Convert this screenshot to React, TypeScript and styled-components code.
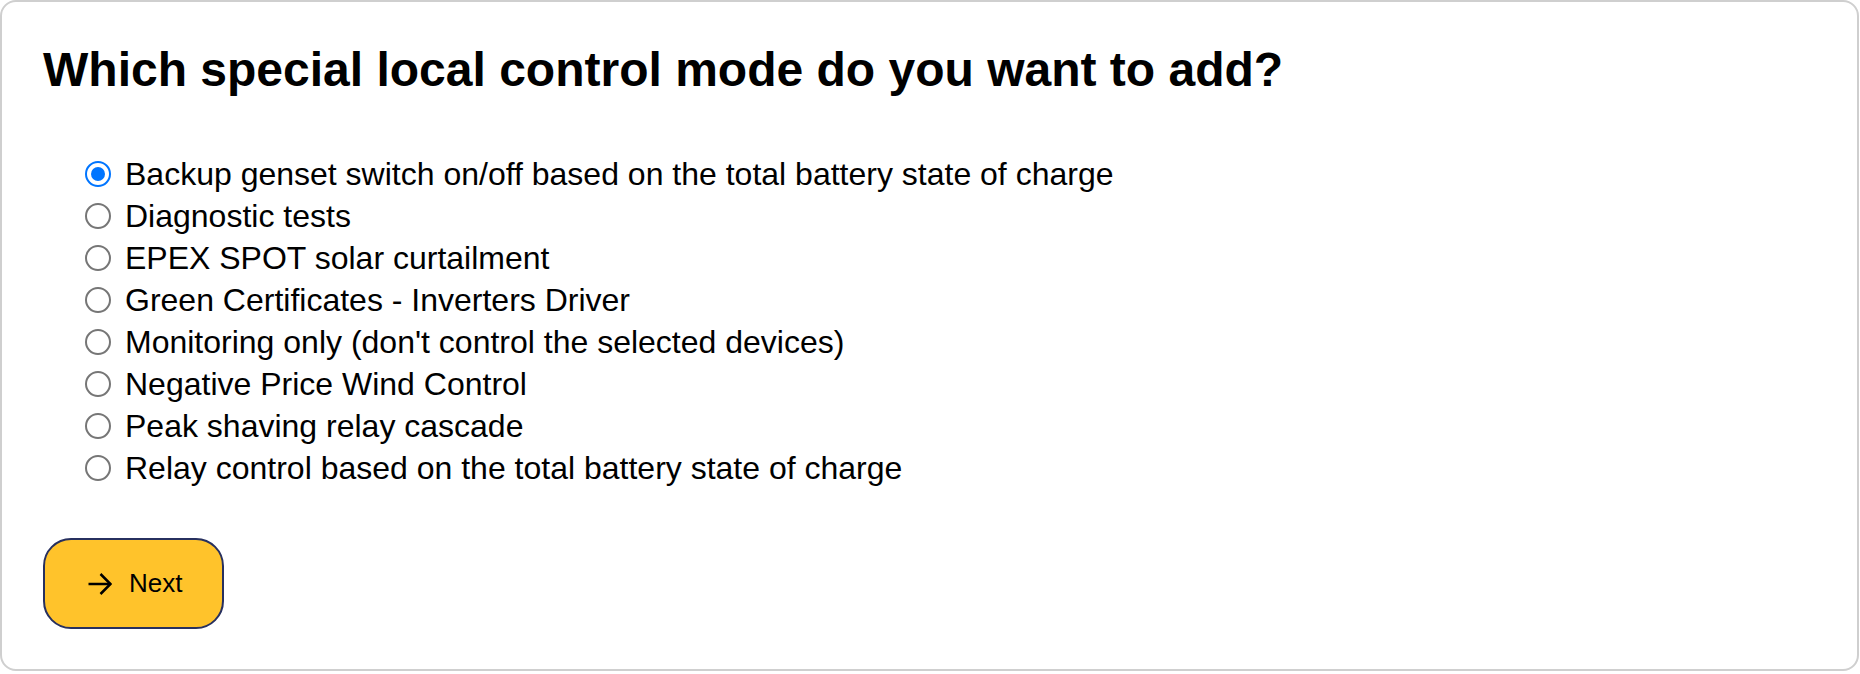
import React, { useState } from 'react';
import styled, { createGlobalStyle } from 'styled-components';

const GlobalStyle = createGlobalStyle`
  html, body {
    margin: 0;
    padding: 0;
    background: #ffffff;
  }
  body {
    font-family: 'Liberation Sans', Arial, sans-serif;
    color: #000000;
  }
`;

const Card = styled.div`
  box-sizing: border-box;
  width: 1859px;
  border: 2px solid #cfcfcf;
  border-radius: 16px;
  background: #ffffff;
  padding: 40px 41px 40px;
  display: flex;
  flex-direction: column;
`;

const Title = styled.h1`
  margin: 0;
  font-size: 48px;
  font-weight: 700;
  line-height: 55px;
`;

const OptionList = styled.div`
  display: flex;
  flex-direction: column;
  margin-top: 56px;
  padding-left: 42px;
`;

const OptionRow = styled.label`
  display: flex;
  align-items: center;
  gap: 14px;
  height: 42px;
  font-size: 32px;
  line-height: 42px;
  cursor: pointer;
`;

const Radio = styled.input.attrs({ type: 'radio' })`
  appearance: none;
  margin: 0;
  flex: none;
  box-sizing: border-box;
  width: 26px;
  height: 26px;
  border-radius: 50%;
  border: 2px solid #767676;
  background: #ffffff;
  display: grid;
  place-items: center;
  cursor: pointer;

  &:checked {
    border: 2.5px solid #0075ff;
  }

  &:checked::after {
    content: '';
    width: 14px;
    height: 14px;
    border-radius: 50%;
    background: #0075ff;
  }
`;

const NextButton = styled.button`
  align-self: flex-start;
  flex: none;
  box-sizing: border-box;
  margin-top: 49px;
  height: 91px;
  padding: 0 40px 0 43px;
  display: flex;
  align-items: center;
  gap: 17px;
  background: #ffc32b;
  border: 2px solid #27305f;
  border-radius: 28px;
  font-family: 'Liberation Sans', Arial, sans-serif;
  font-size: 26px;
  color: #000000;
  cursor: pointer;
`;

const ArrowIcon = () => (
  <svg width="24" height="22" viewBox="0 0 24 22" fill="none" stroke="#000" strokeWidth="2.5">
    <path d="M0.5 11H22.5" />
    <path d="M12.5 1L22.5 11L12.5 21" />
  </svg>
);

const modes = [
  'Backup genset switch on/off based on the total battery state of charge',
  'Diagnostic tests',
  'EPEX SPOT solar curtailment',
  'Green Certificates - Inverters Driver',
  "Monitoring only (don't control the selected devices)",
  'Negative Price Wind Control',
  'Peak shaving relay cascade',
  'Relay control based on the total battery state of charge',
];

const App = () => {
  const [selected, setSelected] = useState(modes[0]);

  return (
    <>
      <GlobalStyle />
      <Card>
        <Title>Which special local control mode do you want to add?</Title>
        <OptionList>
          {modes.map((mode) => (
            <OptionRow key={mode}>
              <Radio name="mode" checked={selected === mode} onChange={() => setSelected(mode)} />
              {mode}
            </OptionRow>
          ))}
        </OptionList>
        <NextButton>
          <ArrowIcon />
          Next
        </NextButton>
      </Card>
    </>
  );
};

export default App;
